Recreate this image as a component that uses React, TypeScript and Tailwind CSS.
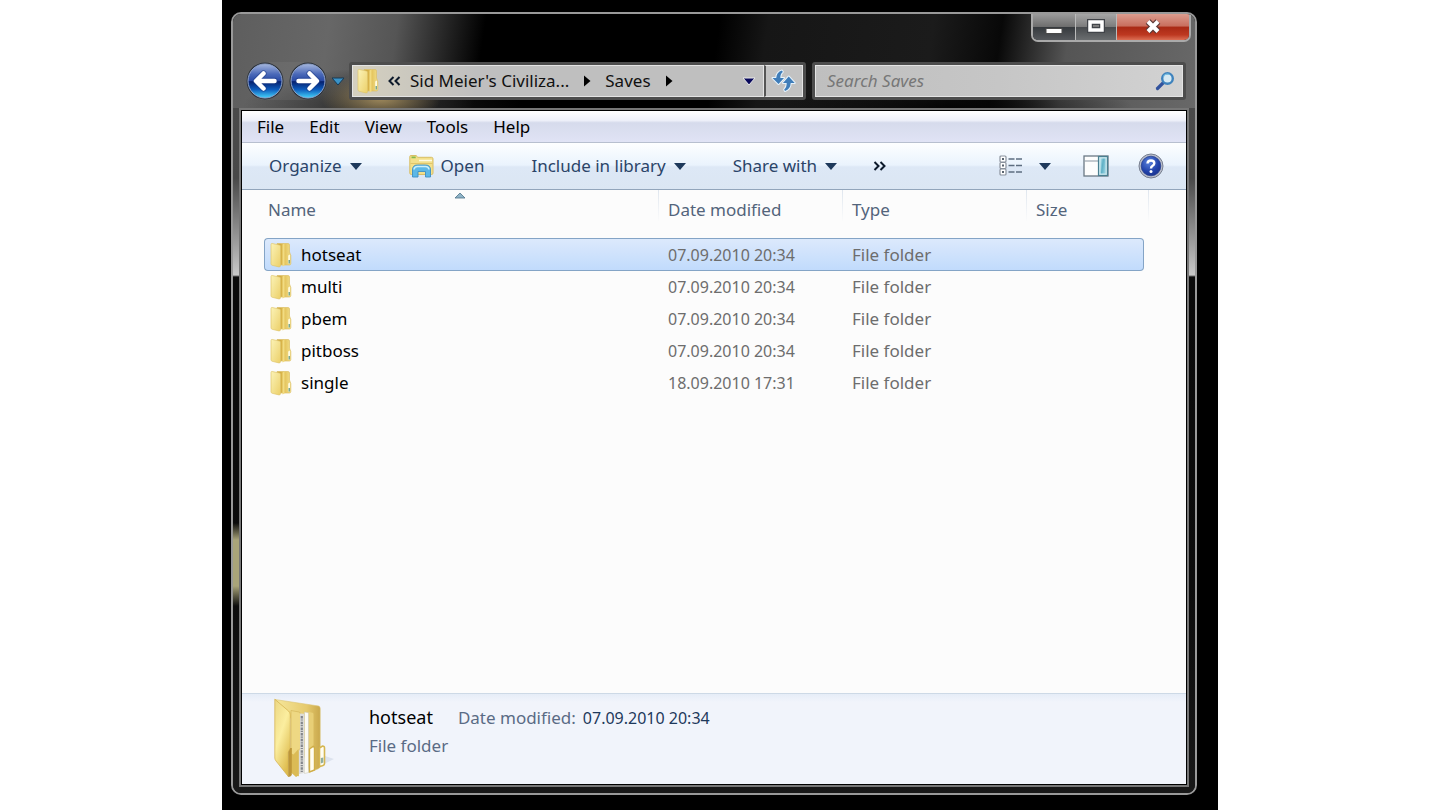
import React from 'react';

type Row = { name: string; date: string; type: string; selected?: boolean };

const rows: Row[] = [
  { name: 'hotseat', date: '07.09.2010 20:34', type: 'File folder', selected: true },
  { name: 'multi', date: '07.09.2010 20:34', type: 'File folder' },
  { name: 'pbem', date: '07.09.2010 20:34', type: 'File folder' },
  { name: 'pitboss', date: '07.09.2010 20:34', type: 'File folder' },
  { name: 'single', date: '18.09.2010 17:31', type: 'File folder' },
];

const menus = ['File', 'Edit', 'View', 'Tools', 'Help'];

function Caret({ className = 'fill-[#1e395b]' }: { className?: string }) {
  return (
    <svg width="12" height="8" viewBox="0 0 12 8" className={className} aria-hidden="true">
      <path d="M0 1h12L6 8z" />
    </svg>
  );
}

function Arrow() {
  return (
    <svg width="8" height="12" viewBox="0 0 8 12" className="fill-black" aria-hidden="true">
      <path d="M1 0.5L7.5 6 1 11.5z" />
    </svg>
  );
}

function Chevrons({ left = false }: { left?: boolean }) {
  return (
    <svg width="14" height="12" viewBox="0 0 14 12" className="fill-none stroke-[#0d1a2b]" strokeWidth="2" aria-hidden="true">
      {left ? (
        <path d="M6.500 2L2.500 6l4 4M12.500 2L8.500 6l4 4" />
      ) : (
        <path d="M1.500 2L5.500 6l-4 4M7.500 2L11.500 6l-4 4" />
      )}
    </svg>
  );
}

function SmallFolder() {
  return (
    <svg width="22" height="26" viewBox="0 0 22 26" className="shrink-0" aria-hidden="true">
      <defs>
        <linearGradient id="sfFront" x1="0" y1="0" x2="1" y2="1">
          <stop offset="0" stopColor="#fbf3b8" />
          <stop offset="1" stopColor="#ecd069" />
        </linearGradient>
        <linearGradient id="sfBack" x1="0" y1="0" x2="1" y2="0">
          <stop offset="0" stopColor="#c39a32" />
          <stop offset="0.5" stopColor="#e2c056" />
          <stop offset="1" stopColor="#f2df8b" />
        </linearGradient>
      </defs>
      <path d="M7 1.500h11q1.500 0 1.500 1.500v7l1.300 3.500v8q0 1.500-1.500 1.500H9z" fill="url(#sfBack)" stroke="#dcc067" strokeWidth="0.700" />
      <path d="M12.500 2.500l2-1v22l-2 1z" fill="#f2dc82" />
      <path d="M1 2.500Q1 1.300 2.200 1.500L9.500 3q1 .3 1 1.500V23.500q0 1.700-1.600 1.400L2.200 23.300Q1 23 1 21.700z" fill="url(#sfFront)" stroke="#e0c66c" strokeWidth="0.700" />
      <path d="M18.200 13.500l1.800-1v9h-1.800z" fill="#fffbe0" />
      <path d="M18.500 18h1.500v3.500h-1.500z" fill="#7ba88c" />
    </svg>
  );
}

function LargeFolder() {
  return (
    <svg width="62" height="82" viewBox="0 0 62 82" className="shrink-0" aria-hidden="true">
      <defs>
        <linearGradient id="lfCover" x1="0" y1="0" x2="0.600" y2="1">
          <stop offset="0" stopColor="#ecd784" />
          <stop offset="0.500" stopColor="#fbee9f" />
          <stop offset="1" stopColor="#dfbd50" />
        </linearGradient>
        <linearGradient id="lfBack" x1="0" y1="0" x2="1" y2="0">
          <stop offset="0" stopColor="#f6e79c" />
          <stop offset="0.700" stopColor="#e6ca6d" />
          <stop offset="1" stopColor="#c9a84c" />
        </linearGradient>
      </defs>
      <path d="M34 74L60 61 51 58z" fill="#dde3ee" />
      <path d="M1 1.500L44.500 8q1.700.4 1.700 2.400V68q0 2-2 2.800L36 74 17 20z" fill="url(#lfBack)" stroke="#dbc474" strokeWidth="0.600" />
      <path d="M17 12.500l8 1.500q1.500.4 1.500 2V50l-2 4v24l-7.500-4z" fill="#eed883" stroke="#d0b254" strokeWidth="0.600" />
      <path d="M26 15.500l4 .3V75l-5 1V54l1-3z" fill="#dddcd8" />
      <path d="M27.800 18v56" stroke="#83868c" strokeWidth="2.200" strokeDasharray="2.500 0.900 1.200 1.100" fill="none" />
      <path d="M30.500 14l4 .8V74.500l-4 1z" fill="#fbfaf4" stroke="#c9c5b0" strokeWidth="0.500" />
      <path d="M35 14l3.500.8q1 .3 1 1.500V47l-2.500 4v22L35 74z" fill="#e8cf76" />
      <path d="M35.500 51l3.500-2.500q1.500 0 1.500 2V72l-5 2z" fill="#fffdf1" stroke="#d0ae48" strokeWidth="1.400" />
      <path d="M45.500 50l3-2q2 0 2 2v15.500q0 1.500-1.500 2l-3.500 1.200z" fill="#fffdf1" stroke="#d5b651" strokeWidth="1.600" />
      <path d="M46.800 60l2.500-.5v5l-2.500 1z" fill="#8eada0" />
      <path d="M16.500 55l3 1.500 5-5.500v26.500L22 79l-5.500-5z" fill="#dbbb55" />
      <path d="M.8 1.200L14.500 13q1.800 1.500 1.800 4v33l-2 4v24.500L2 63Q.8 61.500.8 60z" fill="url(#lfCover)" stroke="#d2ae48" strokeWidth="0.700" />
      <path d="M14.300 54l2-4h1.500v27l-1.500 1.500-2 .5z" fill="#bd9638" />
    </svg>
  );
}

function OpenIcon() {
  return (
    <svg width="25" height="24" viewBox="0 0 25 24" aria-hidden="true">
      <path d="M.8 2.500Q.8 1.500 1.800 1.500h5.500l1.200 1.800h14q1.500 0 1.500 1.500V19q0 1.500-1.500 1.500h-20Q.8 20.500.8 19z" fill="#f3e08b" stroke="#d8be66" />
      <path d="M2.500 2.500h4.200v1.800H2.500z" fill="#84b94d" />
      <path d="M10 6.500h13" stroke="#fffbe2" strokeWidth="1.500" />
      <path d="M1.500 9.500h22" stroke="#e0c56b" />
      <path d="M3.500 23V16q0-5 5-5h8q5 0 5 5v7h-5v-5.500h-7.500V23z" fill="#5db8e6" stroke="#3c8fc4" strokeWidth="0.900" />
      <path d="M5 15.500q.4-3 3.500-3h8q3.100 0 3.500 3" stroke="#c9effc" strokeWidth="1.600" fill="none" />
    </svg>
  );
}

function RoundArrow({ flip = false }: { flip?: boolean }) {
  const id = flip ? 'orbF' : 'orbB';
  return (
    <svg width="38" height="38" viewBox="0 0 38 38" aria-hidden="true">
      <defs>
        <linearGradient id={id} x1="0" y1="0" x2="0" y2="1">
          <stop offset="0" stopColor="#a5b6de" />
          <stop offset="0.300" stopColor="#4a69b8" />
          <stop offset="0.490" stopColor="#2a4ba6" />
          <stop offset="0.520" stopColor="#06206f" />
          <stop offset="0.750" stopColor="#0d5cbd" />
          <stop offset="1" stopColor="#46d5fb" />
        </linearGradient>
      </defs>
      <circle cx="19" cy="19" r="18.500" fill="#2d333c" />
      <circle cx="19" cy="19" r="17" fill={`url(#${id})`} stroke="#8fa3cc" strokeWidth="1" />
      <g transform={flip ? 'matrix(-1 0 0 1 38 0)' : undefined} fill="none" strokeLinejoin="round" strokeLinecap="round">
        <path d="M17.500 11.500L10 19l7.500 7.500M11 19h17.500" stroke="#1d3c86" strokeWidth="6.500" opacity="0.500" />
        <path d="M17.500 11.500L10 19l7.500 7.500M11 19h17.500" stroke="#fff" strokeWidth="4.500" />
      </g>
    </svg>
  );
}

function RefreshIcon() {
  return (
    <svg width="26" height="24" viewBox="0 0 26 24" aria-hidden="true">
      <g stroke="#e6f3fc" strokeWidth="2" fill="#3f7db9" strokeLinejoin="round" paintOrder="stroke">
        <path d="M11 1.500Q5.500 3 5.200 9H1.500l6 6 5.500-6H9.300q0-4.500 2.500-6z" />
        <path d="M14 22q5.500-2 5.700-8h4l-6-6.500L12 14h3.700q0 4.500-2.500 6.500z" />
      </g>
    </svg>
  );
}

function SearchIcon() {
  return (
    <svg width="20" height="20" viewBox="0 0 20 20" className="shrink-0" aria-hidden="true">
      <path d="M9 11L2.500 17.500" stroke="#31529d" strokeWidth="3.200" strokeLinecap="round" />
      <circle cx="12.500" cy="7.500" r="5.300" fill="#d5e9f3" stroke="#3f83bd" strokeWidth="2.400" />
      <path d="M8.500 5.500a4.500 4.500 0 0 1 6-2" stroke="#7cc5e6" strokeWidth="1.200" fill="none" />
    </svg>
  );
}

function ViewIcon() {
  return (
    <svg width="24" height="22" viewBox="0 0 24 22" aria-hidden="true">
      {[1, 7.5, 14].map((y) => (
        <g key={y}>
          <rect x="1" y={y} width="6" height="6" rx="1" fill="#fff" stroke="#8a929d" strokeWidth="1.200" />
          <rect x="3" y={y + 2} width="2" height="2" fill="#59636f" />
          <path d={`M9.500 ${y + 3}h6M17 ${y + 3}h6`} stroke="#5d6d80" strokeWidth="1.600" />
        </g>
      ))}
    </svg>
  );
}

function PreviewIcon() {
  return (
    <svg width="26" height="22" viewBox="0 0 26 22" aria-hidden="true">
      <defs>
        <linearGradient id="pv" x1="0" y1="0" x2="1" y2="0.400">
          <stop offset="0" stopColor="#b9e2ec" />
          <stop offset="0.500" stopColor="#5fb0c6" />
          <stop offset="1" stopColor="#8ccbdb" />
        </linearGradient>
      </defs>
      <rect x="1" y="1" width="24" height="20" fill="#fdfdfd" stroke="#6b7985" strokeWidth="1.300" />
      <path d="M1.500 6H15" stroke="#8996a1" strokeWidth="1.200" />
      <rect x="15.500" y="1.500" width="9" height="19" fill="#c9e8ef" stroke="#4a7f90" strokeWidth="1.200" />
      <rect x="17.500" y="3.500" width="5" height="15" fill="url(#pv)" />
    </svg>
  );
}

function HelpIcon() {
  return (
    <svg width="26" height="26" viewBox="0 0 26 26" aria-hidden="true">
      <defs>
        <radialGradient id="hp" cx="0.400" cy="0.300" r="0.800">
          <stop offset="0" stopColor="#5b83dd" />
          <stop offset="0.600" stopColor="#2243ab" />
          <stop offset="1" stopColor="#1a2f86" />
        </radialGradient>
      </defs>
      <circle cx="13" cy="13" r="12" fill="#b9bdca" stroke="#777f90" strokeWidth="1" />
      <circle cx="13" cy="13" r="9.800" fill="url(#hp)" stroke="#27418f" strokeWidth="0.800" />
      <path d="M9.500 10.500Q9.700 7.500 13 7.500q3.300 0 3.300 2.800 0 1.500-1.700 2.500-1.600.9-1.600 2.600" fill="none" stroke="#fff" strokeWidth="2.400" />
      <circle cx="13" cy="18.500" r="1.500" fill="#fff" />
    </svg>
  );
}

export default function App() {
  return (
    <div className="min-h-screen bg-white font-['Noto_Sans','Open_Sans',sans-serif] text-[17px] leading-6 text-black">
      <div className="mx-auto flex min-h-screen w-full max-w-[996px] flex-col bg-black pt-3 pr-[21px] pb-[15px] pl-[9px]">
        <div className="flex grow flex-col overflow-hidden rounded-[10px] border-2 border-[#999] bg-[#0c0c0c]">
          <header className="flex h-[94px] flex-col justify-between bg-[radial-gradient(ellipse_60px_26px_at_148px_84px,#a08a5c,transparent),radial-gradient(ellipse_140px_40px_at_150px_100%,#1c1c1c,transparent),radial-gradient(ellipse_180px_30px_at_720px_100%,#050505,transparent),linear-gradient(98deg,#5e5e5e_0%,#676767_10%,#555_17%,#000_26%,#000_50%,#161616_55%,#1b1b1b_72%,#080808_79%,#555_86%,#686868_100%)] pb-2">
            <div className="flex justify-end pr-1">
              <div className="flex h-7 overflow-hidden rounded-b-[7px] border-2 border-t-0 border-[#aaa] bg-[#222]">
                <button type="button" aria-label="Minimize" className="flex w-[43px] items-center justify-center border-r border-[#bbb] bg-[linear-gradient(#9a9a9a,#6f6f6f_48%,#363a3e_52%,#55585c)]">
                  <svg width="20" height="22" viewBox="0 0 20 22" aria-hidden="true">
                    <rect x="2" y="12.500" width="16" height="5" fill="#fff" stroke="#4a4a4a" />
                  </svg>
                </button>
                <button type="button" aria-label="Maximize" className="flex w-[41px] items-center justify-center border-r border-[#bbb] bg-[linear-gradient(#a6a6a6,#7d7d7d_48%,#484b4e_52%,#6b6e70)]">
                  <svg width="20" height="22" viewBox="0 0 20 22" aria-hidden="true">
                    <rect x="4" y="6" width="12" height="8" fill="none" stroke="#414449" strokeWidth="6" />
                    <rect x="4" y="6" width="12" height="8" fill="none" stroke="#fff" strokeWidth="3.500" />
                  </svg>
                </button>
                <button type="button" aria-label="Close" className="flex w-[72px] items-center justify-center bg-[linear-gradient(#dc9c8e,#c9705f_45%,#aa2a15_52%,#bd3820_80%,#dc6f55)]">
                  <svg width="20" height="22" viewBox="0 0 20 22" aria-hidden="true">
                    <path d="M5 5.500l10 10M15 5.500l-10 10" stroke="#5c3a38" strokeWidth="6.500" />
                    <path d="M5 5.500l10 10M15 5.500l-10 10" stroke="#fff" strokeWidth="4" />
                  </svg>
                </button>
              </div>
            </div>
            <div className="flex items-center pr-[9px] pl-[13px]">
              <div className="flex items-center gap-[5px] rounded-full bg-[#888]/20">
                <button type="button" aria-label="Back"><RoundArrow /></button>
                <button type="button" aria-label="Forward"><RoundArrow flip /></button>
              </div>
              <button type="button" aria-label="Recent pages" className="px-[5px]">
                <Caret className="fill-[#3a93c8] stroke-[#173a55]" />
              </button>
              <div className="flex h-[38px] w-[457px] shrink items-stretch rounded-[3px] border-3 border-[#4d4d4d] bg-[#c2c2c2]">
                <nav aria-label="Address" className="flex grow items-center border border-[#e4e4e4] bg-[linear-gradient(90deg,#d5d0bf,#bfbfbf_30%)] pr-2 pl-1 text-[#111]">
                  <SmallFolder />
                  <button type="button" aria-label="Earlier folders" className="ml-2 mr-[9px]"><Chevrons left /></button>
                  <a href="#civ" className="whitespace-nowrap">Sid Meier's Civiliza...</a>
                  <span className="mx-[14px]"><Arrow /></span>
                  <a href="#saves">Saves</a>
                  <span className="mx-[14px]"><Arrow /></span>
                  <button type="button" aria-label="Previous locations" className="ml-auto">
                    <Caret className="fill-[#08085c] stroke-[#e8e8e8]" />
                  </button>
                </nav>
                <button type="button" aria-label="Refresh" className="flex w-[39px] items-center justify-center border border-l-2 border-[#e4e4e4] border-l-[#555]">
                  <RefreshIcon />
                </button>
              </div>
              <div className="ml-[6px] flex h-[38px] grow items-center rounded-[3px] border-3 border-[#4d4d4d] bg-[linear-gradient(90deg,#bfbfbf,#c6c6c6_50%,#d2d2d2)] pr-2 pl-[12px] inset-ring inset-ring-[#e4e4e4]">
                <input type="search" aria-label="Search Saves" placeholder="Search Saves" className="w-0 grow bg-transparent outline-none placeholder:text-[#777] placeholder:italic" />
                <SearchIcon />
              </div>
            </div>
          </header>

          <div className="flex grow flex-col bg-[linear-gradient(transparent_415px,#a9a479_432px,#a9a479_478px,transparent_498px),linear-gradient(#4a4a4a,#484848_70px,#c8c8c8_167px,#0a0a0a_169px,#0c0c0c_70%,#181818)] bg-[length:8px_100%,100%_100%] bg-no-repeat px-[6px] pb-[6px]">
            <main className="flex grow flex-col border-2 border-[#777]">
              <div className="flex grow flex-col border border-black bg-[#fcfcfc]">
                <nav aria-label="Menu" className="flex h-8 items-center gap-[25px] border-b border-[#b7bfcf] bg-[linear-gradient(#fff,#eff1fa_30%,#d6dbec_38%,#e0e3f5)] px-[15px]">
                  {menus.map((m) => (
                    <button key={m} type="button">{m}</button>
                  ))}
                </nav>
                <div role="toolbar" aria-label="Commands" className="flex h-[47px] items-center gap-[47px] border-b border-[#92a5bb] bg-[linear-gradient(#fdfeff,#eaf3fd_48%,#dde8f6_52%,#dbe6f3)] pr-[22px] pl-[27px] text-[#2b4468]">
                  <button type="button" className="flex items-center gap-2">Organize <Caret /></button>
                  <button type="button" className="flex items-center gap-[7px]"><OpenIcon /> Open</button>
                  <button type="button" className="flex items-center gap-2 whitespace-nowrap">Include in library <Caret /></button>
                  <button type="button" className="flex items-center gap-2 whitespace-nowrap">Share with <Caret /></button>
                  <button type="button" aria-label="More commands" className="-ml-[11px]"><Chevrons /></button>
                  <div className="ml-auto flex items-center">
                    <button type="button" aria-label="Change view"><ViewIcon /></button>
                    <button type="button" aria-label="View options" className="ml-4"><Caret /></button>
                    <button type="button" aria-label="Preview pane" className="ml-8"><PreviewIcon /></button>
                    <button type="button" aria-label="Help" className="ml-[29px]"><HelpIcon /></button>
                  </div>
                </div>

                <div className="grow pr-[37px] pl-[22px]">
                  <table className="w-full table-fixed border-separate border-spacing-0 text-left">
                    <colgroup>
                      <col />
                      <col className="w-[184px]" />
                      <col className="w-[184px]" />
                      <col className="w-[117px]" />
                      <col className="w-[5px]" />
                    </colgroup>
                    <thead className="text-[#53647b]">
                      <tr className="h-12">
                        <th className="relative bg-[linear-gradient(#dfe6ee,#fcfcfc)] bg-[length:1px_32px] bg-right-top bg-no-repeat px-1 pb-2 font-normal">
                          Name
                          <svg width="12" height="7" viewBox="0 0 12 7" className="absolute top-[2px] left-1/2 -translate-x-2" aria-hidden="true">
                            <path d="M1 6L6 1l5 5z" fill="#8fb3c7" stroke="#4d7288" strokeWidth="0.800" />
                          </svg>
                        </th>
                        <th className="bg-[linear-gradient(#dfe6ee,#fcfcfc)] bg-[length:1px_32px] bg-right-top bg-no-repeat px-[9px] pb-2 font-normal">Date modified</th>
                        <th className="bg-[linear-gradient(#dfe6ee,#fcfcfc)] bg-[length:1px_32px] bg-right-top bg-no-repeat px-[9px] pb-2 font-normal">Type</th>
                        <th colSpan={2} className="bg-[linear-gradient(#dfe6ee,#fcfcfc)] bg-[length:1px_32px] bg-right-top bg-no-repeat px-[9px] pb-2 font-normal">Size</th>
                      </tr>
                    </thead>
                    <tbody className="text-[#6d6d6d]">
                      {rows.map((r) => {
                        const cell = r.selected
                          ? 'h-[33px] border-y border-[#84a4c6] bg-[linear-gradient(#dce9fc,#c1dbfc)]'
                          : 'h-8';
                        return (
                          <tr key={r.name} aria-selected={!!r.selected}>
                            <td className={`${cell} text-black ${r.selected ? 'rounded-l-[4px] border-l px-[5px]' : 'px-[6px]'}`}>
                              <div className="flex items-center gap-[9px]"><SmallFolder />{r.name}</div>
                            </td>
                            <td className={`${cell} px-[9px] text-base`}>{r.date}</td>
                            <td className={`${cell} px-[9px]`}>{r.type}</td>
                            <td className={`${cell} ${r.selected ? 'rounded-r-[4px] border-r' : ''}`} />
                            <td />
                          </tr>
                        );
                      })}
                    </tbody>
                  </table>
                </div>

                <footer className="flex h-[91px] gap-[33px] border-t border-[#cdd9e6] bg-[linear-gradient(#e6edf7,#f1f4fb_8px)] pt-1 pl-[32px]">
                  <LargeFolder />
                  <div className="flex flex-col gap-1 pt-[7px] text-[#5a6b85]">
                    <div className="flex items-baseline">
                      <span className="text-lg leading-6 text-black">hotseat</span>
                      <span className="ml-[25px]">Date modified:</span>
                      <span className="ml-[7px] text-base leading-6 text-[#1e395b]">07.09.2010 20:34</span>
                    </div>
                    <div>File folder</div>
                  </div>
                </footer>
              </div>
            </main>
          </div>
        </div>
      </div>
    </div>
  );
}
